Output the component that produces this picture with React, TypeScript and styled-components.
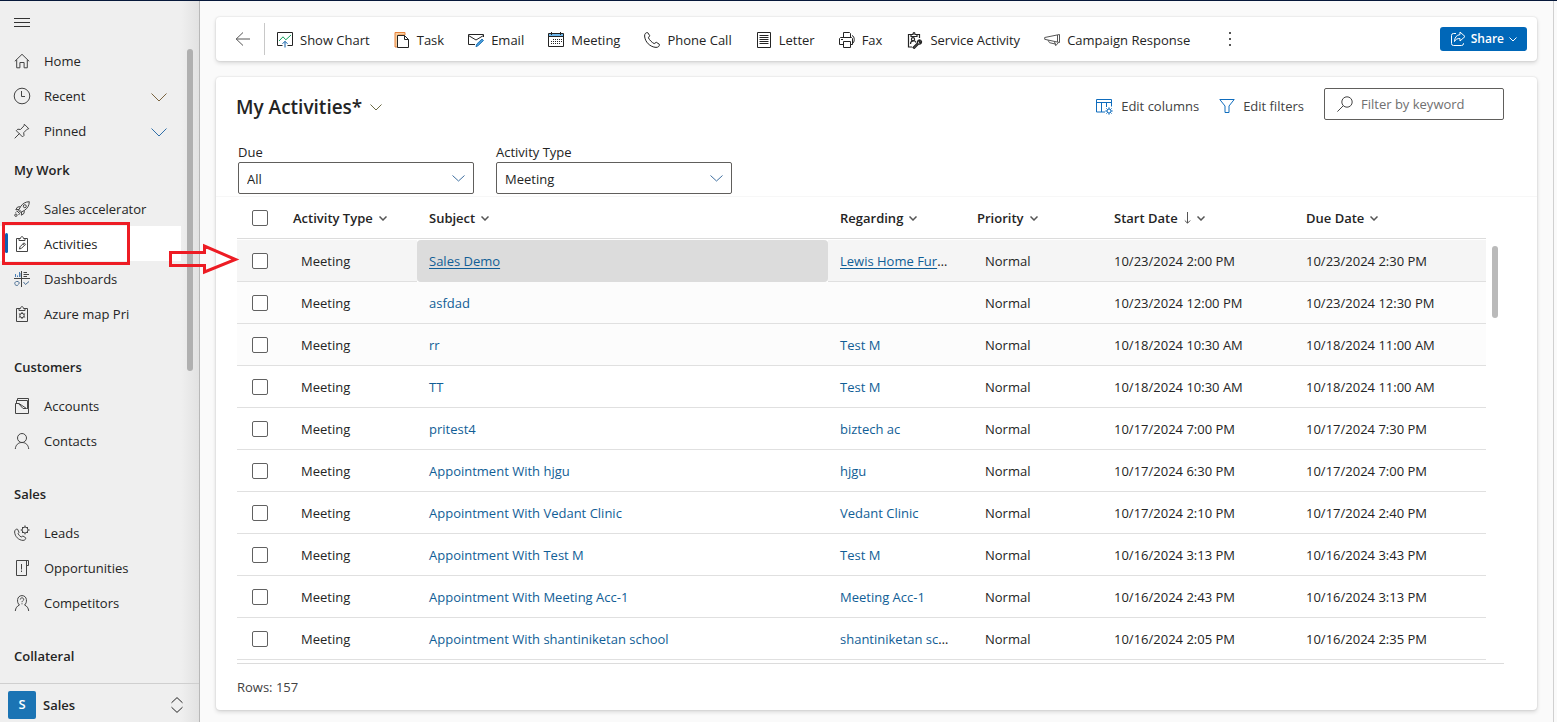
import React from "react";
import styled, { createGlobalStyle, css } from "styled-components";

const GlobalStyle = createGlobalStyle`
  *, *::before, *::after { box-sizing: border-box; }
  body {
    margin: 0;
    background: #fafafa;
    color: #242424;
    font-family: "Open Sans", "Segoe UI", sans-serif;
    font-size: 13px;
    line-height: 20px;
  }
  button, input, select { font: inherit; color: inherit; }
  a { color: inherit; text-decoration: none; }
  svg { display: block; flex: none; }
`;

/* ---------- icons ---------- */

const Line = styled.svg<{ $thick?: number }>`
  fill: none;
  stroke: currentColor;
  stroke-width: ${(p) => p.$thick ?? 1};
`;

type IconProps = { children: React.ReactNode; size?: number };
const Icon = ({ children, size = 16 }: IconProps) => (
  <Line width={size} height={size} viewBox={`0 0 ${size} ${size}`} aria-hidden="true">
    {children}
  </Line>
);

const Chevron = ({ w, h, thick = 1 }: { w: number; h: number; thick?: number }) => (
  <Line $thick={thick} width={w} height={h + 1} viewBox={`0 0 ${w} ${h + 1}`} aria-hidden="true">
    <path d={`M.5 .5L${w / 2} ${h}L${w - 0.5} .5`} />
  </Line>
);

const icons = {
  home: (
    <Icon>
      <path d="M.8 8.3L8 1.3l7.200 7M2.700 6.800v8h3.200V9.500h4.200v5.300h3.200v-8" />
    </Icon>
  ),
  clock: (
    <Icon size={18}>
      <circle cx="9" cy="9" r="7.8" />
      <path d="M8.5 4v5.5H12" />
    </Icon>
  ),
  pin: (
    <Icon>
      <path d="M.7 15.3L5.6 10.4M10.3 1.2l4.500 4.500-1.600.5-3.500 3.500.3 2.700-1.500 1.500-6.200-6.200 1.500-1.500 2.700.3L10 2.800z" />
    </Icon>
  ),
  rocket: (
    <Icon>
      <path d="M15.3.7c-3.800.1-6.600 1.700-8.800 5L5 8.500l2.500 2.500 2.800-1.500c3.300-2.200 4.900-5 5-8.800zM6.500 5.700L3.600 6 1.800 8.600 5 8.500M10.300 9.500L10 12.400 7.400 14.200 7.500 11M2.800 9.800L5.800 12.800M4 9.200L6.500 11.700" />
      <circle cx="10.8" cy="5.2" r="1.5" />
      <circle cx="1.9" cy="14.2" r="1.2" />
      <path d="M1.5 11.5l1-.8M4.500 14l.8-1" />
    </Icon>
  ),
  activity: (
    <Icon>
      <path d="M5 2.500H2.500v13h11v-13H11M5 4.500v-2h1.500c0-2.500 3-2.500 3 0H11v2zM5.500 13l.5-2.200 4-4 1.500 1.500-4 4zM9 7.800l1.500 1.500" />
    </Icon>
  ),
  dashboards: (
    <Icon>
      <path d="M1.5 6V3M3.5 6V4.500M5.500 6V1M7 6V2" stroke="#4a7fb5" />
      <path d="M9.5 1.500H13M9.500 3.500H15M9.500 5.500H13" />
      <path d="M0 7.500h16M7.500 0v16" />
      <path d="M4.5 10.500h-2a2 2 0 1 0 2 3M4 12h2M9.500 11l2 2.500 3.500-3" stroke="#4a6f95" />
    </Icon>
  ),
  azure: (
    <Icon>
      <path d="M5 2.500H2.500v13h11v-13H11M5 4.500v-2h1.500c0-2.500 3-2.500 3 0H11v2z" />
      <circle cx="8" cy="9.5" r="2.2" />
      <path d="M8 6v1.500M8 11.500V13M4.900 7.700l1.400.8M9.700 10.500l1.400.8M4.900 11.300l1.400-.8M9.700 8.500l1.400-.8" />
    </Icon>
  ),
  accounts: (
    <Icon>
      <path d="M1.5 5.500v10h13v-5h-2L5 5.500zM2.500 5V2.500h11v8M3.500 2V.5h11v10M4.500 5.500L9 10.500h3" />
    </Icon>
  ),
  contacts: (
    <Icon>
      <circle cx="8" cy="5" r="4.500" />
      <path d="M1.3 16c.3-3.900 2.800-6.500 6.700-6.500s6.400 2.600 6.700 6.500" />
    </Icon>
  ),
  leads: (
    <Icon>
      <path d="M3.6 4.300C2.300 3.600.6 5 .6 7c.3 4.500 4 8.200 8.400 8.400 2 0 3.100-1.500 2.600-2.700L8.900 11l-1.700 1C5.900 11.300 4.700 10 4.100 8.700L5 7.300z" />
      <circle cx="11" cy="5" r="3" />
      <path d="M11 .4v1.700M11 7.900v1.500M6.700 5h1.500M14 5h1.700M8 2l1.100 1.100M12.900 6.900L14 8M8 8l1.100-1.100M12.900 3.100L14 2" />
    </Icon>
  ),
  opportunities: (
    <Icon>
      <path d="M2.5.5h12v5h-2M2.500.5v15h10V.5M7.500 4v5.500M7.500 10.500v1.500" />
    </Icon>
  ),
  competitors: (
    <Icon>
      <path d="M1.3 16c.3-3.100 1.800-5 4.200-6C2.500 8 2.600.6 8 .6S13.500 8 10.500 10c2.400 1 3.900 2.900 4.200 6" />
      <path d="M6.3 4.500c0-2.200 3.400-2.200 3.400 0C9.700 5.700 8 5.700 8 7.200M8 8.300v1" />
    </Icon>
  ),
  chart: (
    <Icon>
      <path d="M5.5 13.500h-5v-13h15v13h-5" />
      <path d="M2 9l4-4.200 2.800 3L14 3" stroke="#12a05c" />
      <path d="M8 15.500V9.500M5.500 11.800L8 9.300l2.500 2.500" stroke="#0f5fa8" />
    </Icon>
  ),
  task: (
    <Icon>
      <path d="M1 .5h10V3H4v12H1z" fill="#f8cfa0" stroke="#e8823a" />
      <path d="M3.5 3.500h7l4 4v8h-11zM10.500 3.500v4h4" fill="#fff" />
    </Icon>
  ),
  email: (
    <Icon>
      <path d="M7 12.500H.5v-10h15v2.500M.5 3.500L8 8l7.500-4.500" />
      <path d="M8 14.800l.8-2.800 5.200-5 1.500 1.500-5.200 5z" fill="#4a9edb" stroke="#2878b8" />
    </Icon>
  ),
  meeting: (
    <Icon>
      <path d="M.5 1.500h15v3H.5z" fill="#6db7ec" stroke="none" />
      <path d="M.5 1.500h15v13H.5zM.5 4.500h15M3.500 0v3M12.500 0v3" />
      <path d="M5 7.500h9M3 9.500h11M3 11.500h9" strokeDasharray="1 1" />
    </Icon>
  ),
  phone: (
    <Icon>
      <path d="M3.8.7C2 .2.5 1.800.6 4 1 10 6 15 12 15.400c2.200.1 3.800-1.400 3.300-3.200l-3-1.900-2.100 1.300C8 10.600 5.500 8 4.400 5.800l1.300-2.100z" />
    </Icon>
  ),
  letter: (
    <Icon>
      <path d="M1.5.5h13v15h-13zM3.500 3.500h9M3.500 5.500h9M3.500 7.500h9M3.500 9.500h9M3.500 11.500h9" />
    </Icon>
  ),
  fax: (
    <Icon>
      <path d="M4.5 5.500v-5h6l1 1v4M4.500 12.500H.5v-6l1-1h11l1 1v6h-2M4.500 9.500h7v6h-7zM2 7.500h2M13 3.500c3 1 3 7 0 8.500" />
    </Icon>
  ),
  service: (
    <Icon size={17}>
      <g strokeWidth="1.2">
        <path d="M5 2.500H2.500v12.500H6M11 2.500h2.500V6M5 4.500v-2h2c0-2.500 2-2.500 2 0h2v2zM4.500 12c0-4 4.500-4 5.500-1.500" />
        <circle cx="7" cy="7.200" r="1.6" />
        <path d="M7 15.500l4.500-4.500c-.6-2 1.500-3.600 3-2.800l-1.500 1.600.8.8 1.600-1.400c.6 1.800-1 3.500-2.900 2.800L8.200 16.500z" />
      </g>
    </Icon>
  ),
  campaign: (
    <Icon>
      <path
        d="M15.5 2.500v8L.7 7.300V5.500zM13.500 3v7M4 8.200l1.500 2.500 6.500 1.500M10.500 9.700l1.200 4 2.800-3.200"
        stroke="#555"
      />
    </Icon>
  ),
  columns: (
    <Icon size={17}>
      <path d="M.5 1.500h15v7M.5 1.500v12.500h8.500M.5 4.500h15M5.500 4.500V14M10.500 4.500V9" />
      <circle cx="13" cy="13" r="2" />
      <path d="M13 9.300v1.700M13 15v1.700M9.300 13H11M15 13h1.700M10.400 10.400l1.200 1.200M14.400 14.400l1.200 1.200M10.400 15.600l1.200-1.200M14.400 11.600l1.200-1.200" />
    </Icon>
  ),
  filter: (
    <Icon>
      <path d="M.8 1.500h14.400L10 8v6.500H6V8z" />
    </Icon>
  ),
  search: (
    <Icon>
      <circle cx="10" cy="6" r="5.200" />
      <path d="M6.3 9.700L.4 15.600" />
    </Icon>
  ),
  share: (
    <Icon>
      <path d="M6 2.500H3.500a2 2 0 0 0-2 2v8a2 2 0 0 0 2 2h8a2 2 0 0 0 2-2V12M10 1l5 4.500-5 4.500V7.500C7.300 7.300 5.500 8.500 4.500 10.500 4.600 6.500 6.500 4 10 3.600z" />
    </Icon>
  ),
  back: (
    <Icon>
      <path d="M15 8H1M8 1.500L1.200 8 8 14.500" />
    </Icon>
  ),
  more: (
    <Icon>
      <g fill="currentColor" stroke="none">
        <rect x="7" y="1" width="2" height="2" />
        <rect x="7" y="7" width="2" height="2" />
        <rect x="7" y="13" width="2" height="2" />
      </g>
    </Icon>
  ),
  menu: (
    <Icon>
      <path d="M0 3.500h16M0 7.500h16M0 11.500h16" />
    </Icon>
  ),
  switcher: (
    <Icon>
      <path d="M2.5 5.800L8 .6l5.500 5.200M2.500 10.200L8 15.400l5.500-5.200" />
    </Icon>
  ),
  sort: (
    <Line width="7" height="12" viewBox="0 0 7 12" aria-hidden="true">
      <path d="M3.5 0v11M.8 8.500l2.700 2.700 2.700-2.700" />
    </Line>
  ),
};
type IconName = keyof typeof icons;

/* ---------- shell ---------- */

const Shell = styled.div`
  position: relative;
  display: flex;
  min-height: 100vh;
  border-top: 1px solid #06183a;
`;

const Sidebar = styled.aside`
  display: flex;
  flex-direction: column;
  flex: none;
  width: 200px;
  border-right: 1px solid #b8b8b8;
  background: linear-gradient(to left, #e2e2e2, #efefef 18px);
`;

const NavArea = styled.div`
  display: flex;
  flex: 1;
`;

const Nav = styled.nav`
  width: 181px;
`;

const ScrollThumb = styled.div<{ $length: number; $top: number; $color: string }>`
  width: 6px;
  height: ${(p) => p.$length}px;
  margin: ${(p) => p.$top}px 0 0 6px;
  border-radius: 3px;
  background: ${(p) => p.$color};
`;

const MenuButton = styled.button`
  display: flex;
  align-items: center;
  height: 42px;
  padding: 2px 14px 0;
  border: 0;
  background: none;
  color: #333;
`;

const NavGroup = styled.section`
  & + & { margin-top: 14px; }
`;

const NavHeading = styled.h2`
  height: 43px;
  margin: 0;
  padding-left: 14px;
  font-size: 13px;
  font-weight: 600;
  line-height: 45px;
`;

const NavList = styled.ul`
  margin: 0;
  padding: 0;
  list-style: none;
`;

const NavLink = styled.a<{ $active?: boolean }>`
  position: relative;
  display: flex;
  align-items: center;
  height: 35px;
  padding-right: 14px;
  ${(p) =>
    p.$active &&
    css`
      background: #fff;
      &::before {
        content: "";
        position: absolute;
        left: 5px;
        top: 7px;
        width: 3px;
        height: 20px;
        border-radius: 2px;
        background: #0f5fb0;
      }
    `}
`;

const NavIcon = styled.span`
  display: flex;
  justify-content: center;
  width: 44px;
  color: #444;
`;

const NavText = styled.span`
  flex: 1;
  white-space: nowrap;
`;

const ExpandMark = styled.span<{ $color: string }>`
  padding-top: 3px;
  color: ${(p) => p.$color};
`;

const Highlight = styled.span`
  position: absolute;
  left: 2px;
  top: -4px;
  width: 128px;
  height: 43px;
  border: 3px solid #ed1c24;
`;

const Pointer = styled.svg`
  position: absolute;
  left: 169px;
  top: 242px;
  fill: none;
  stroke: #ed1c24;
  stroke-width: 3;
`;

const AreaSwitch = styled.button`
  display: flex;
  align-items: center;
  height: 39px;
  padding: 3px 14px 0 8px;
  border: 0;
  border-top: 1px solid #cfcfcf;
  background: none;
  font-weight: 600;
  text-align: left;
`;

const AreaBadge = styled.span`
  width: 28px;
  height: 28px;
  margin-right: 7px;
  border-radius: 2px;
  background: #1b74b4;
  color: #fff;
  line-height: 26px;
  text-align: center;
`;

const Main = styled.main`
  display: flex;
  flex: 1;
  flex-direction: column;
  gap: 16px;
  min-width: 0;
  padding: 16px 16px 12px;
  margin-right: 3px;
  border-right: 1px solid #d0d0d0;
  background: #fafafa;
`;

const Card = styled.section`
  border-radius: 4px;
  background: #fff;
  box-shadow: 0 0 2px rgba(0, 0, 0, 0.14), 0 2px 4px rgba(0, 0, 0, 0.14);
`;

/* ---------- command bar ---------- */

const CommandBar = styled(Card)`
  display: flex;
  align-items: center;
  height: 44px;
  padding: 0 10px 0 19px;
`;

const IconButton = styled.button`
  display: flex;
  padding: 0;
  border: 0;
  background: none;
  color: #555;
`;

const Divider = styled.span`
  width: 1px;
  height: 32px;
  margin: 0 12px 0 13px;
  background: #c8c8c8;
`;

const Commands = styled.div`
  display: flex;
  flex: 1;
  align-items: center;
  gap: 24px;
  padding-top: 2px;
`;

const MoreButton = styled(IconButton)`
  margin-left: 8px;
  margin-top: -2px;
`;

const Command = styled.button`
  display: flex;
  align-items: center;
  gap: 7px;
  padding: 0;
  border: 0;
  background: none;
  line-height: 20px;
  white-space: nowrap;
`;

const ShareButton = styled.button`
  display: flex;
  align-items: center;
  gap: 5px;
  height: 24px;
  padding: 0 10px;
  border: 0;
  border-radius: 3px;
  background: #0067b8;
  color: #fff;
  font-size: 12px;
  font-weight: 600;
  line-height: 24px;
`;

/* ---------- list view ---------- */

const ViewCard = styled(Card)`
  flex: 1;
  padding-top: 11px;
`;

const ViewHead = styled.header`
  display: flex;
  align-items: flex-start;
  justify-content: space-between;
  height: 37px;
  padding: 0 33px 0 20px;
`;

const ViewTitle = styled.h1`
  display: flex;
  align-items: center;
  gap: 8px;
  margin: 0;
  font-size: 19px;
  font-weight: 600;
  line-height: 39px;
`;

const TitleMark = styled.span`
  color: #6b6a45;
`;

const ViewTools = styled.div`
  display: flex;
  gap: 20px;
`;

const ViewTool = styled(Command)`
  gap: 8px;
  height: 36px;
  color: #424242;
  svg { color: #0f6cbd; }
`;

const SearchBox = styled.label`
  display: flex;
  align-items: center;
  gap: 8px;
  width: 180px;
  height: 32px;
  padding: 0 12px;
  border: 1px solid #605e5c;
  border-radius: 2px;
  color: #444;
`;

const SearchInput = styled.input`
  min-width: 0;
  flex: 1;
  padding: 0;
  border: 0;
  outline: 0;
  background: none;
  &::placeholder { color: #707070; opacity: 1; }
`;

const Filters = styled.div`
  display: flex;
  gap: 22px;
  padding: 17px 22px 2px;
`;

const Field = styled.div`
  position: relative;
  width: 236px;
`;

const FieldLabel = styled.label`
  display: block;
`;

const Select = styled.select`
  display: block;
  width: 100%;
  height: 32px;
  padding: 2px 8px 0;
  border: 1px solid #605e5c;
  border-radius: 2px;
  background: #fff;
  appearance: none;
`;

const SelectMark = styled.span`
  position: absolute;
  right: 9px;
  bottom: 12px;
  color: #3f6fa0;
  pointer-events: none;
`;

const GridArea = styled.div`
  display: flex;
  padding: 0 33px 0 21px;
  border-top: 1px solid #f7f7f7;
`;

const GridScroll = styled.div`
  flex: none;
  width: 18px;
`;

const Table = styled.table`
  flex: 1;
  min-width: 0;
  width: 100%;
  border-spacing: 0;
  table-layout: fixed;
`;

const Col = styled.col<{ $width?: number }>`
  width: ${(p) => (p.$width ? `${p.$width}px` : "auto")};
`;

const HeadCell = styled.th`
  height: 43px;
  padding: 0 12px;
  border-bottom: 1px solid #fff;
  box-shadow: inset 0 -1px 0 #dcdcdc;
  text-align: left;
`;

const SortButton = styled.button`
  display: flex;
  align-items: center;
  gap: 6px;
  padding: 0;
  border: 0;
  background: none;
  font-weight: 600;
  white-space: nowrap;
  svg { color: #555; }
`;

const Row = styled.tr<{ $tone: string }>`
  background: ${(p) => p.$tone};
`;

const Cell = styled.td<{ $indent?: boolean; $focused?: boolean }>`
  height: 42px;
  padding: 0 12px 0 ${(p) => (p.$indent ? 20 : 12)}px;
  overflow: hidden;
  border-bottom: 1px solid #e0e0e0;
  text-overflow: ellipsis;
  white-space: nowrap;
  ${(p) =>
    p.$focused &&
    css`
      border-radius: 4px;
      border-color: #dcdcdc;
      background: #dcdcdc;
    `}
`;

const RecordLink = styled.a<{ $underlined?: boolean }>`
  color: #115e96;
  text-decoration: ${(p) => (p.$underlined ? "underline" : "none")};
  text-underline-offset: 2px;
`;

const Check = styled.input`
  display: block;
  width: 16px;
  height: 16px;
  margin: 0 0 0 3px;
  border: 1px solid #616161;
  border-radius: 2px;
  background: #fff;
  appearance: none;
`;

const GridFoot = styled.footer`
  margin: 3px 33px 0 21px;
  border-top: 1px solid #dcdcdc;
  color: #424242;
  line-height: 46px;
`;

/* ---------- data ---------- */

type NavItem = { icon: IconName; label: string; expand?: string; active?: boolean };
const navGroups: { title: string; items: NavItem[] }[] = [
  {
    title: "My Work",
    items: [
      { icon: "rocket", label: "Sales accelerator" },
      { icon: "activity", label: "Activities", active: true },
      { icon: "dashboards", label: "Dashboards" },
      { icon: "azure", label: "Azure map Pri" },
    ],
  },
  {
    title: "Customers",
    items: [
      { icon: "accounts", label: "Accounts" },
      { icon: "contacts", label: "Contacts" },
    ],
  },
  {
    title: "Sales",
    items: [
      { icon: "leads", label: "Leads" },
      { icon: "opportunities", label: "Opportunities" },
      { icon: "competitors", label: "Competitors" },
    ],
  },
  { title: "Collateral", items: [] },
];

const topItems: NavItem[] = [
  { icon: "home", label: "Home" },
  { icon: "clock", label: "Recent", expand: "#7a6440" },
  { icon: "pin", label: "Pinned", expand: "#2f6ea8" },
];

const commands: [IconName, string][] = [
  ["chart", "Show Chart"],
  ["task", "Task"],
  ["email", "Email"],
  ["meeting", "Meeting"],
  ["phone", "Phone Call"],
  ["letter", "Letter"],
  ["fax", "Fax"],
  ["service", "Service Activity"],
  ["campaign", "Campaign Response"],
];

const headings = ["Activity Type", "Subject", "Regarding", "Priority", "Start Date", "Due Date"];

const rows: [string, string, string, string][] = [
  ["Sales Demo", "Lewis Home Furniture", "10/23/2024 2:00 PM", "10/23/2024 2:30 PM"],
  ["asfdad", "", "10/23/2024 12:00 PM", "10/23/2024 12:30 PM"],
  ["rr", "Test M", "10/18/2024 10:30 AM", "10/18/2024 11:00 AM"],
  ["TT", "Test M", "10/18/2024 10:30 AM", "10/18/2024 11:00 AM"],
  ["pritest4", "biztech ac", "10/17/2024 7:00 PM", "10/17/2024 7:30 PM"],
  ["Appointment With hjgu", "hjgu", "10/17/2024 6:30 PM", "10/17/2024 7:00 PM"],
  ["Appointment With Vedant Clinic", "Vedant Clinic", "10/17/2024 2:10 PM", "10/17/2024 2:40 PM"],
  ["Appointment With Test M", "Test M", "10/16/2024 3:13 PM", "10/16/2024 3:43 PM"],
  ["Appointment With Meeting Acc-1", "Meeting Acc-1", "10/16/2024 2:43 PM", "10/16/2024 3:13 PM"],
  ["Appointment With shantiniketan school", "shantiniketan school", "10/16/2024 2:05 PM", "10/16/2024 2:35 PM"],
];

const rowTones = ["#f5f5f5", "#fcfcfc", "#fcfcfc"];

/* ---------- parts ---------- */

const NavItems = ({ items }: { items: NavItem[] }) => (
  <NavList>
    {items.map((item) => (
      <li key={item.label}>
        <NavLink href="#" $active={item.active} aria-current={item.active ? "page" : undefined}>
          <NavIcon>{icons[item.icon]}</NavIcon>
          <NavText>{item.label}</NavText>
          {item.expand && (
            <ExpandMark $color={item.expand}>
              <Chevron w={16} h={8} />
            </ExpandMark>
          )}
          {item.active && <Highlight />}
        </NavLink>
      </li>
    ))}
  </NavList>
);

const FilterSelect = ({ id, label, value }: { id: string; label: string; value: string }) => (
  <Field>
    <FieldLabel htmlFor={id}>{label}</FieldLabel>
    <Select id={id} defaultValue={value}>
      <option>{value}</option>
    </Select>
    <SelectMark>
      <Chevron w={13} h={6} />
    </SelectMark>
  </Field>
);

export default function App() {
  return (
    <Shell>
      <GlobalStyle />
      <Sidebar>
        <NavArea>
          <Nav aria-label="Site map">
            <MenuButton aria-label="Toggle site map">{icons.menu}</MenuButton>
            <NavItems items={topItems} />
            {navGroups.map((group) => (
              <NavGroup key={group.title}>
                <NavHeading>{group.title}</NavHeading>
                <NavItems items={group.items} />
              </NavGroup>
            ))}
          </Nav>
          <ScrollThumb $length={322} $top={48} $color="#b0b0b0" />
        </NavArea>
        <AreaSwitch>
          <AreaBadge>S</AreaBadge>
          <NavText>Sales</NavText>
          {icons.switcher}
        </AreaSwitch>
      </Sidebar>

      <Main>
        <CommandBar>
          <IconButton aria-label="Back">{icons.back}</IconButton>
          <Divider />
          <Commands>
            {commands.map(([icon, label]) => (
              <Command key={label}>
                {icons[icon]}
                {label}
              </Command>
            ))}
            <MoreButton aria-label="More commands">{icons.more}</MoreButton>
          </Commands>
          <ShareButton>
            {icons.share}
            Share
            <Chevron w={8} h={4} />
          </ShareButton>
        </CommandBar>

        <ViewCard>
          <ViewHead>
            <ViewTitle>
              My Activities*
              <TitleMark>
                <Chevron w={12} h={6} />
              </TitleMark>
            </ViewTitle>
            <ViewTools>
              <ViewTool>
                {icons.columns}
                Edit columns
              </ViewTool>
              <ViewTool>
                {icons.filter}
                Edit filters
              </ViewTool>
              <SearchBox>
                {icons.search}
                <SearchInput type="text" placeholder="Filter by keyword" aria-label="Filter by keyword" />
              </SearchBox>
            </ViewTools>
          </ViewHead>

          <Filters>
            <FilterSelect id="due" label="Due" value="All" />
            <FilterSelect id="activity-type" label="Activity Type" value="Meeting" />
          </Filters>

          <GridArea>
            <Table>
              <colgroup>
                <Col $width={44} />
                <Col $width={136} />
                <Col />
                <Col $width={137} />
                <Col $width={137} />
                <Col $width={192} />
                <Col $width={192} />
              </colgroup>
              <thead>
                <tr>
                  <HeadCell>
                    <Check type="checkbox" aria-label="Select all rows" />
                  </HeadCell>
                  {headings.map((heading) => (
                    <HeadCell key={heading} scope="col">
                      <SortButton>
                        {heading}
                        {heading === "Start Date" && icons.sort}
                        <Chevron w={8} h={4} thick={1.5} />
                      </SortButton>
                    </HeadCell>
                  ))}
                </tr>
              </thead>
              <tbody>
                {rows.map(([subject, regarding, start, due], i) => (
                  <Row key={subject} $tone={rowTones[i] ?? "#fff"}>
                    <Cell>
                      <Check type="checkbox" aria-label={`Select ${subject}`} />
                    </Cell>
                    <Cell $indent>Meeting</Cell>
                    <Cell $focused={i === 0}>
                      <RecordLink href="#" $underlined={i === 0}>
                        {subject}
                      </RecordLink>
                    </Cell>
                    <Cell>
                      {regarding && (
                        <RecordLink href="#" $underlined={i === 0}>
                          {regarding}
                        </RecordLink>
                      )}
                    </Cell>
                    <Cell $indent>Normal</Cell>
                    <Cell>{start}</Cell>
                    <Cell>{due}</Cell>
                  </Row>
                ))}
              </tbody>
            </Table>
            <GridScroll>
              <ScrollThumb $length={72} $top={49} $color="#bababa" />
            </GridScroll>
          </GridArea>
          <GridFoot>Rows: 157</GridFoot>
        </ViewCard>
      </Main>

      <Pointer width="72" height="32" viewBox="0 0 72 32" aria-hidden="true">
        <path d="M1.5 9.500h34v-6.500l31 13.500-31 12.500v-6.500h-34z" />
      </Pointer>
    </Shell>
  );
}
